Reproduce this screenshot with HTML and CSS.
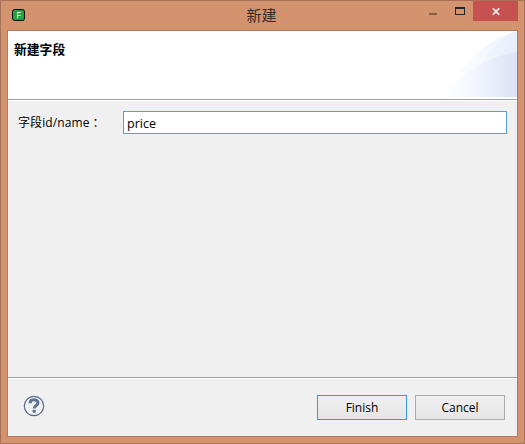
FILE: index.html
```html
<!DOCTYPE html>
<html lang="zh-CN">
<head>
<meta charset="utf-8">
<title>新建</title>
<link rel="stylesheet" href="styles.css">
</head>
<body>
<div class="window">
  <header class="titlebar">
    <svg class="app-icon" width="13" height="12" viewBox="0 0 13 12">
      <rect x=".5" y=".5" width="12" height="11" rx="2.2" fill="#25a33a" stroke="#000"/>
      <path d="M5.5 9.2V3.5H9M5.5 6.5H8.5" fill="none" stroke="#fff"/>
    </svg>
    <h1 class="title">新建</h1>
    <div class="controls">
      <span class="minimize"></span>
      <span class="maximize"></span>
      <button class="close" aria-label="Close">
        <svg width="8" height="7" viewBox="0 0 8 7"><path d="M.8 .3L7.2 6.7M7.2 .3L.8 6.7" stroke="#fff" stroke-width="1.6"/></svg>
      </button>
    </div>
  </header>
  <main class="dialog">
    <section class="banner">
      <h2 class="heading">新建字段</h2>
      <svg class="wave" width="75" height="66" viewBox="0 0 75 66">
        <defs>
          <linearGradient id="low" gradientUnits="userSpaceOnUse" x1="0" x2="75" y1="0" y2="0"><stop offset="0" stop-color="#fff"/><stop offset=".4" stop-color="#f4f7fd"/><stop offset="1" stop-color="#dbe2f6"/></linearGradient>
          <linearGradient id="mid" gradientUnits="userSpaceOnUse" x1="10" x2="75" y1="0" y2="0"><stop offset="0" stop-color="#fff"/><stop offset=".5" stop-color="#f6f8fd"/><stop offset="1" stop-color="#edf1fb"/></linearGradient>
          <linearGradient id="high" gradientUnits="userSpaceOnUse" x1="38" x2="75" y1="0" y2="0"><stop offset="0" stop-color="#f3f6fd"/><stop offset="1" stop-color="#e7edfa"/></linearGradient>
        </defs>
        <path d="M0 66C21 31 43 9 75 0V66Z" fill="url(#mid)"/>
        <path d="M38 37C47 18 59 5 75 0V66H38Z" fill="url(#high)"/>
        <path d="M0 66C22 40 46 25 75 21V66Z" fill="url(#low)"/>
      </svg>
    </section>
    <section class="form">
      <label class="label" for="field">字段id/name<span class="colon">：</span></label>
      <input class="field" id="field" type="text" value="price">
    </section>
    <footer class="footer">
      <svg class="help" width="22" height="22" viewBox="0 0 22 22">
        <circle cx="11" cy="11" r="9.7" fill="#f1f2f4" stroke="#566c8c" stroke-width="1.2"/>
        <path d="M7 8.2C7 3.6 15 3.6 15 7.7C15 10.6 11.2 10.4 11.2 13.6" fill="none" stroke="#5d7394" stroke-width="3"/>
        <rect x="9.6" y="14.8" width="3.2" height="3" rx=".8" fill="#5d7394"/>
      </svg>
      <button class="button primary">Finish</button>
      <button class="button">Cancel</button>
    </footer>
  </main>
</div>
</body>
</html>
```

FILE: styles.css
```css
* { box-sizing: border-box; }

body {
  margin: 0;
  font: 12px "Open Sans", "Noto Sans CJK SC", sans-serif;
  color: #000;
}

.window {
  width: 525px;
  height: 444px;
  padding: 0 6px 6px;
  border: 1px solid #a87057;
  background: #d3936f;
}

.titlebar {
  display: grid;
  grid-template-columns: 1fr auto 1fr;
  height: 29px;
}

.app-icon { margin: 8px 0 0 5px; }

.title {
  margin: 3px 1px 0 -1px;
  font: 15px/22px "Noto Sans CJK SC", sans-serif;
  color: #303030;
}

.controls {
  display: flex;
  justify-content: flex-end;
}

.minimize {
  width: 8px;
  height: 2px;
  margin: 12px 18px 0 0;
  background: #80604f;
}

.maximize {
  width: 10px;
  height: 8px;
  margin: 6px 8px 0 0;
  border: 1px solid #252525;
  border-top-width: 2px;
}

.close {
  display: flex;
  justify-content: center;
  align-items: center;
  width: 45px;
  height: 20px;
  padding: 1px 0 0 1px;
  border: 0;
  background: #c75050;
}

.dialog {
  display: flex;
  flex-direction: column;
  width: 511px;
  height: 407px;
  border: 1px solid #b07a5f;
  background: #f0f0f0;
}

.banner {
  display: flex;
  justify-content: space-between;
  height: 69px;
  border-bottom: 1px solid #a0a0a0;
  background: #fff;
}

.heading {
  margin: 8px 0 0 6px;
  font: bold 12.8px/19px "Noto Sans CJK SC", sans-serif;
}

.form {
  display: flex;
  flex: 1;
  align-items: flex-start;
  padding: 10px 10px 0;
  border-top: 1px solid #fff;
}

.label {
  width: 105px;
  line-height: 24px;
  letter-spacing: 0.1px;
  white-space: nowrap;
}

.colon { padding-left: 3px; }

.field {
  flex: 1;
  height: 23px;
  padding: 1px 3px 0;
  border: 1px solid #569de5;
  outline: 0;
  background: #fff;
  font: inherit;
  font-size: 12.5px;
}

.footer {
  display: flex;
  gap: 8px;
  height: 59px;
  padding: 17px 12px 0 15px;
  border-top: 1px solid #a0a0a0;
  box-shadow: inset 0 1px #fff;
}

.help { margin: 0 auto 0 0; }

.button {
  width: 90px;
  height: 25px;
  padding: 0;
  border: 1px solid #acacac;
  background: linear-gradient(#f0f0f0, #e5e5e5);
  font: inherit;
  color: #000;
}

.primary { border-color: #3399ff; }
```
